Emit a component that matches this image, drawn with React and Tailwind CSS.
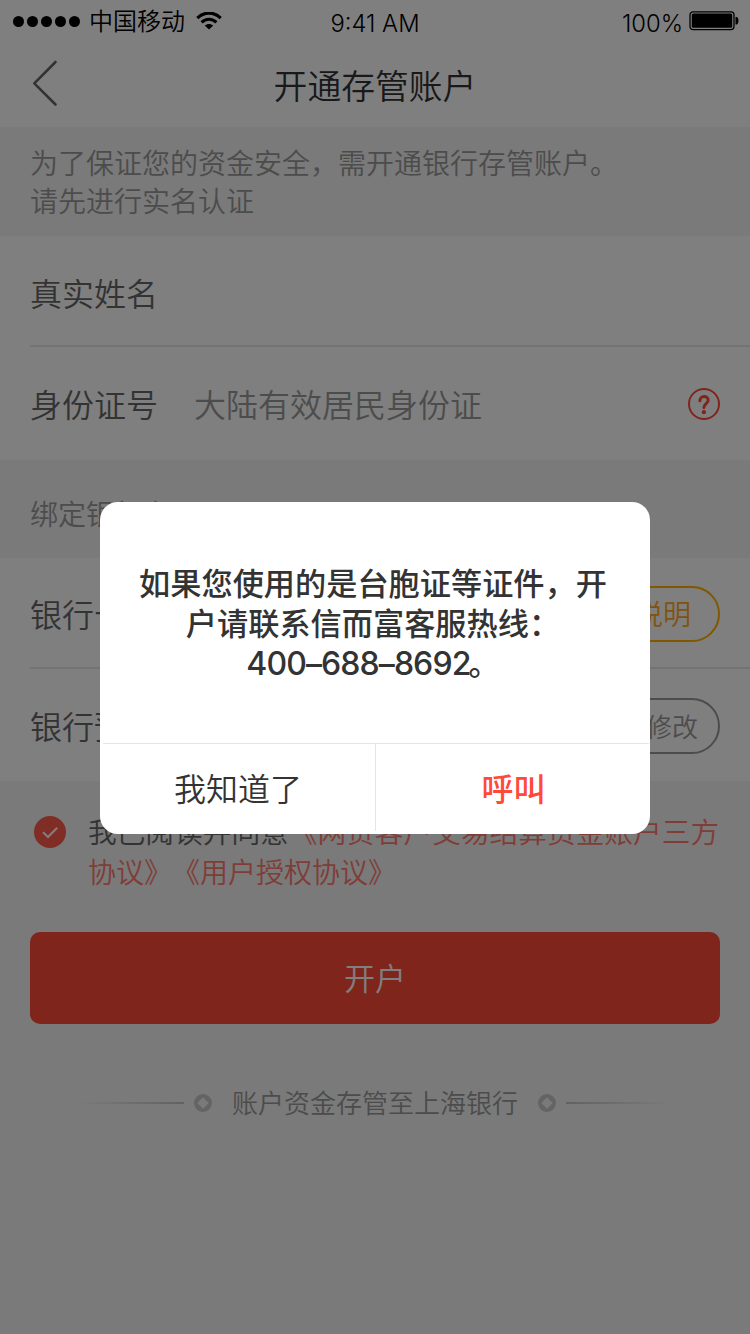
import React from "react";

function StatusBar() {
  return (
    <div className="flex h-[44px] shrink-0 items-start justify-between text-black">
      <div className="flex w-[250px] items-center pl-[13px] pt-[4px]">
        <div className="flex gap-[3px]">
          {[0, 1, 2, 3, 4].map((i) => (
            <span key={i} className="h-[11px] w-[11px] rounded-full bg-black" />
          ))}
        </div>
        <span className="ml-[9px] pb-[2px] text-[24px] leading-[32px]">中国移动</span>
        <svg className="ml-[11px]" width="26" height="18" viewBox="0 0 26 18" fill="none" stroke="#000">
          <path d="M1.3 6.2C8 -0.6 18 -0.6 24.7 6.2" strokeWidth="3.2" />
          <path d="M5.6 10.4C9.8 6.3 16.2 6.3 20.4 10.4" strokeWidth="3" />
          <path d="M13 17.6L8.7 13.6C11.2 11.4 14.8 11.4 17.3 13.6Z" fill="#000" stroke="none" />
        </svg>
      </div>
      <span className="w-[250px] pt-[7px] text-center font-[Inter] text-[23.8px] leading-[34px]">9:41 AM</span>
      <div className="flex w-[250px] items-start justify-end pr-[11px] pt-[6px]">
        <span className="pt-px font-[Inter] text-[23.8px] leading-[34px]">100%</span>
        <svg className="ml-[6px] mt-[5px]" width="50" height="20" viewBox="0 0 50 20">
          <rect x="1" y="0.8" width="44" height="17.8" rx="3" fill="none" stroke="#000" strokeWidth="1.3" />
          <rect x="2.8" y="2.6" width="40.4" height="14.2" rx="1.5" fill="#000" />
          <path d="M46.5 6h1.5q1.5 0.8 1.5 3.7t-1.5 3.7h-1.5z" fill="#000" />
        </svg>
      </div>
    </div>
  );
}

function Ornament() {
  return (
    <svg width="18" height="18" viewBox="0 0 18 18">
      <path fillRule="evenodd" fill="#c8c8c8" d="M9 0a9 9 0 1 1 0 18a9 9 0 0 1 0-18zM9 3.3L3.3 9L9 14.7L14.7 9z" />
    </svg>
  );
}

function Page() {
  return (
    <div className="flex h-full flex-col font-[350]">
      <StatusBar />
      <header className="flex h-[83px] shrink-0 items-center">
        <div className="w-[100px] pl-[32px]">
          <svg className="-mt-[6px]" width="26" height="48" viewBox="0 0 26 48" fill="none" stroke="#666" strokeWidth="2.6" strokeLinecap="round" strokeLinejoin="round">
            <path d="M23.5 3L2.3 24.3L23.5 45.5" />
          </svg>
        </div>
        <h1 className="flex-1 pb-px text-center text-[33.8px] leading-[48px] text-[#333]">开通存管账户</h1>
        <div className="w-[100px]" />
      </header>
      <section className="h-[109px] shrink-0 bg-[#f4f4f4] pl-[30px] pt-[16px] text-[28px] leading-[38px] text-[#999]">
        <p>为了保证您的资金安全，需开通银行存管账户。</p>
        <p>请先进行实名认证</p>
      </section>
      <section className="h-[224px] shrink-0 pl-[30px] text-[32px] text-[#666]">
        <div className="flex h-[111px] items-center border-b-2 border-[#e6e6e6] pt-[2px]">真实姓名</div>
        <div className="flex h-[113px] items-center pr-[30px]">
          <span className="w-[164px] pb-[2px]">身份证号</span>
          <span className="flex-1 pb-[2px] text-[#999]">大陆有效居民身份证</span>
          <svg width="32" height="32" viewBox="0 0 32 32" fill="none" stroke="#ff4a39">
            <circle cx="16" cy="16" r="15" strokeWidth="2" />
            <path d="M11.9 12.8C11.9 7 20.2 7.2 20.2 12.2C20.2 15.4 15.9 15.8 15.9 19.6" strokeWidth="3" strokeLinecap="round" />
            <circle cx="15.9" cy="24.2" r="2.1" fill="#ff4a39" stroke="none" />
          </svg>
        </div>
      </section>
      <section className="flex h-[98px] shrink-0 items-center bg-[#f4f4f4] pl-[30px] pt-[8px] text-[28px] text-[#999]">绑定银行卡</section>
      <section className="h-[223px] shrink-0 pl-[30px] text-[32px] text-[#666]">
        <div className="flex h-[111px] items-center justify-between border-b-2 border-[#e6e6e6] pr-[30px] pt-[2px]">
          <span className="pb-[2px]">银行卡号</span>
          <span className="flex h-[56px] w-[168px] items-center justify-center rounded-full border-2 border-[#ffb000] pb-[2px] pr-[2px] text-[28px] text-[#ffa81e]">限额说明</span>
        </div>
        <div className="flex h-[112px] items-center justify-between pr-[30px] pt-[2px]">
          <span className="pb-[3px]">银行预留手机</span>
          <span className="flex h-[56px] w-[118px] items-center justify-end rounded-full border-2 border-[#999] pb-[2px] pr-[20px] text-[26px] text-[#999]">修改</span>
        </div>
      </section>
      <section className="flex flex-1 flex-col bg-[#f4f4f4]">
        <div className="flex pl-[34px] pt-[31px]">
          <svg className="mt-[4px] shrink-0" width="32" height="32" viewBox="0 0 32 32" fill="none">
            <circle cx="16" cy="16" r="16" fill="#ff5b4b" />
            <path d="M9 16.2L14 21L23.2 11.8" stroke="#fff" strokeWidth="2" />
          </svg>
          <div className="-mt-px ml-[22px] text-[28.7px] leading-[40px] text-[#ff7a6e] [font-kerning:none] [text-spacing-trim:space-all]">
            <p className="whitespace-nowrap"><span className="text-[#666]">我已阅读并同意</span>《网贷客户交易结算资金账户三方</p>
            <p className="whitespace-nowrap text-[28px]">协议》《用户授权协议》</p>
          </div>
        </div>
        <button className="mx-[30px] mt-[41px] h-[92px] rounded-[10px] bg-[#ff4a39] pb-[2px] text-[31px] text-[#fff]">开户</button>
        <div className="mt-[59px] flex items-center justify-center">
          <div className="h-[2px] w-[104px] bg-gradient-to-r from-transparent to-[#c4c4c4]" />
          <div className="mx-[10px]"><Ornament /></div>
          <span className="mx-[10px] pb-[2px] text-[26px] leading-[38px] text-[#999]">账户资金存管至上海银行</span>
          <div className="mx-[10px]"><Ornament /></div>
          <div className="h-[2px] w-[104px] bg-gradient-to-l from-transparent to-[#c4c4c4]" />
        </div>
      </section>
    </div>
  );
}

export default function App() {
  return (
    <div className="relative h-[1334px] w-[750px] overflow-hidden bg-white font-['Noto_Sans_CJK_SC',sans-serif]">
      <Page />
      <div className="absolute inset-0 flex items-start justify-center bg-black/50 pt-[502px]">
        <div className="flex h-[332px] w-[550px] flex-col rounded-[18px] bg-white">
          <div className="h-[241px] pr-[4px] pt-[60px] text-center text-[31.2px] font-medium leading-[40px] text-[#333]">
            <p>如果您使用的是台胞证等证件，开</p>
            <p>户请联系信而富客服热线：</p>
            <p><span className="font-[Inter] text-[32px] font-[450] tracking-[-0.9px]">400–688–8692</span><span className="-ml-[2px]">。</span></p>
          </div>
          <div className="ml-[3px] mr-px flex flex-1 border-t border-[#e5e5e5] pb-[3px] text-[32px]">
            <button className="w-[273px] border-r border-[#e5e5e5] pb-[2px] pr-[2px] font-[350] text-[#333]">我知道了</button>
            <button className="flex-1 pb-[2px] pl-[2px] font-medium text-[#ff4a39]">呼叫</button>
          </div>
        </div>
      </div>
    </div>
  );
}
